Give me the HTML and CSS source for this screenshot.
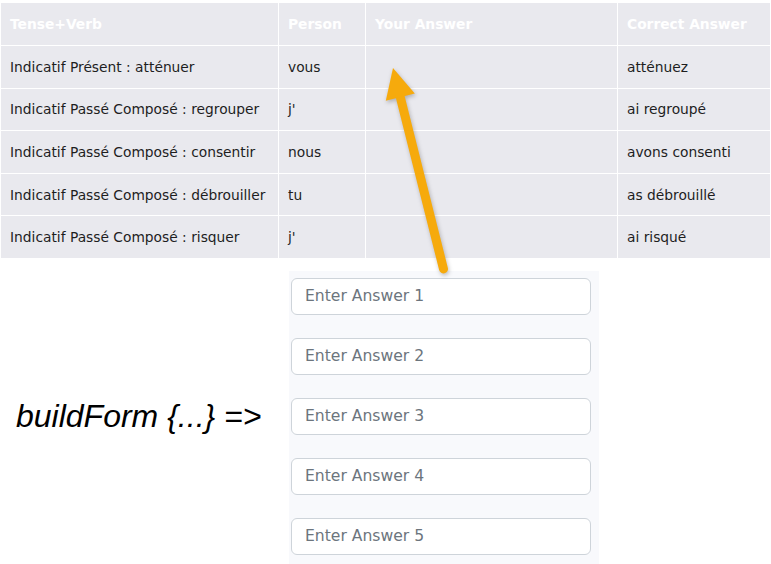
FILE: index.html
```html
<!DOCTYPE html>
<html lang="fr">
<head>
    <meta charset="UTF-8">
    <title>buildForm</title>
    <link rel="stylesheet" href="styles.css">
</head>
<body>
    <table class="verbs">
        <colgroup>
            <col class="c-verb">
            <col class="c-person">
            <col class="c-answer">
            <col class="c-correct">
        </colgroup>
        <thead>
            <tr>
                <th>Tense+Verb</th>
                <th>Person</th>
                <th>Your Answer</th>
                <th>Correct Answer</th>
            </tr>
        </thead>
        <tbody>
            <tr><td>Indicatif Présent : atténuer</td><td>vous</td><td></td><td>atténuez</td></tr>
            <tr><td>Indicatif Passé Composé : regrouper</td><td>j'</td><td></td><td>ai regroupé</td></tr>
            <tr><td>Indicatif Passé Composé : consentir</td><td>nous</td><td></td><td>avons consenti</td></tr>
            <tr><td>Indicatif Passé Composé : débrouiller</td><td>tu</td><td></td><td>as débrouillé</td></tr>
            <tr><td>Indicatif Passé Composé : risquer</td><td>j'</td><td></td><td>ai risqué</td></tr>
        </tbody>
    </table>

    <div class="build">
        <div class="label">buildForm {...} =&gt;</div>
        <form class="panel">
            <input type="text" placeholder="Enter Answer 1">
            <input type="text" placeholder="Enter Answer 2">
            <input type="text" placeholder="Enter Answer 3">
            <input type="text" placeholder="Enter Answer 4">
            <input type="text" placeholder="Enter Answer 5">
        </form>
    </div>

    <!-- arrow drawn over the table and the form -->
    <svg class="arrow" width="771" height="564" viewBox="0 0 771 564">
        <line x1="400" y1="96" x2="443.5" y2="269" stroke="#f6aa0c" stroke-width="9" stroke-linecap="round"/>
        <polygon points="393,68 385.8,100.7 414.8,93.5" fill="#f6aa0c"/>
    </svg>
</body>
</html>
```

FILE: styles.css
```css
* {
    margin: 0;
    padding: 0;
    box-sizing: border-box;
}
body {
    position: relative;
    width: 771px;
    height: 564px;
    overflow: hidden;
    background-color: #fff;
    font-family: "DejaVu Sans", Verdana, sans-serif;
}
.verbs {
    width: 100%;
    margin-top: 2px;
    border-collapse: separate;
    border-spacing: 1px;
    table-layout: fixed;
    font-size: 13.8px;
    color: #1e1e1e;
}
.verbs .c-verb {
    width: 277px;
}
.verbs .c-person {
    width: 86px;
}
.verbs .c-answer {
    width: 251px;
}
.verbs th,
.verbs td {
    height: 41.6px;
    padding: 0 9px;
    background-color: #e9e9ee;
    text-align: left;
    white-space: nowrap;
}
.verbs th {
    height: 42px;
    color: #fff;
    font-weight: bold;
}
.build {
    display: flex;
    margin-top: 12px;
}
.label {
    width: 289px;
    padding-left: 16px;
    align-self: center;
    margin-bottom: 6px;
    font-family: "Liberation Sans", Arial, sans-serif;
    font-style: italic;
    font-size: 32px;
    color: #000;
}
.panel {
    display: flex;
    flex-direction: column;
    gap: 23px;
    width: 310px;
    padding: 7px 8px 14px 2px;
    background-color: #f8f9fc;
}
.panel input {
    width: 300px;
    height: 37px;
    padding: 0 13px;
    border: 1px solid #ced4da;
    border-radius: 6px;
    background-color: #fff;
    font-family: "DejaVu Sans", Verdana, sans-serif;
    font-size: 15.6px;
}
.panel input::placeholder {
    color: #6c757d;
}
.arrow {
    position: absolute;
    top: 0;
    left: 0;
    filter: drop-shadow(1px 2px 2px rgba(0, 0, 0, 0.25));
}
```
